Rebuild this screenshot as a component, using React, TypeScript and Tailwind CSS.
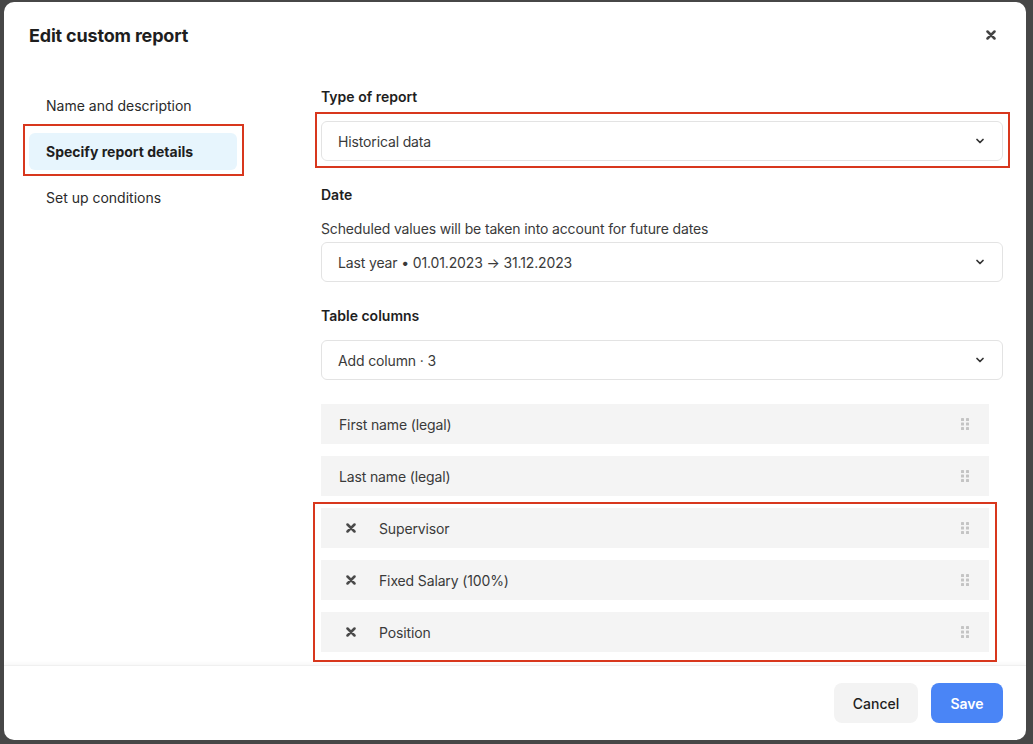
import { ChevronDown } from 'lucide-react';

const XMark = ({ className }: { className?: string }) => (
  <svg aria-hidden="true" className={className} viewBox="0 0 10 10" fill="none">
    <path d="M1.5 1.5l7 7M8.5 1.5l-7 7" stroke="currentColor" strokeWidth="2.5" strokeLinecap="round" />
  </svg>
);

const DragHandle = () => (
  <svg aria-hidden="true" className="h-[12px] w-[8px] text-[#c4c4c4]" viewBox="0 0 8 12" fill="currentColor">
    <rect x="0" y="0" width="3" height="3" rx="0.6" />
    <rect x="5" y="0" width="3" height="3" rx="0.6" />
    <rect x="0" y="4.5" width="3" height="3" rx="0.6" />
    <rect x="5" y="4.5" width="3" height="3" rx="0.6" />
    <rect x="0" y="9" width="3" height="3" rx="0.6" />
    <rect x="5" y="9" width="3" height="3" rx="0.6" />
  </svg>
);

const Select = ({ value }: { value: string }) => (
  <div className="flex h-[40px] items-center justify-between rounded-[6px] border border-[#e3e3e3] bg-white pl-[16px] pr-[16px] text-[14px] tracking-[-0.01em] text-[#3a3a3a]">
    <span>{value}</span>
    <ChevronDown aria-hidden="true" className="h-[12px] w-[12px] text-[#333]" strokeWidth={3.5} />
  </div>
);

const ColumnRow = ({ label, removable }: { label: string; removable?: boolean }) => (
  <div className="flex h-[40px] items-center justify-between bg-[#f4f4f4] pr-[20px] text-[14px] tracking-[-0.01em] text-[#3a3a3a]">
    <div className="flex items-center">
      {removable ? (
        <>
          <XMark className="ml-[25px] h-[10px] w-[10px] text-[#4a4a4a]" />
          <span className="ml-[23px]">{label}</span>
        </>
      ) : (
        <span className="ml-[18px]">{label}</span>
      )}
    </div>
    <DragHandle />
  </div>
);

const navItems = ['Name and description', 'Specify report details', 'Set up conditions'];

export default function App() {
  return (
    <div className="min-h-screen w-full bg-[#474747] pl-[4px] pt-[2px] font-['Inter','Liberation_Sans',sans-serif]">
      <div className="flex h-[738px] w-[1022px] flex-col overflow-hidden rounded-[10px] bg-white">
        <header className="flex h-[66px] shrink-0 items-center justify-between pl-[25px] pr-[30px]">
          <h1 className="text-[18px] font-bold tracking-[-0.01em] text-[#1e1e1e]">Edit custom report</h1>
          <XMark className="h-[10px] w-[10px] text-[#444]" />
        </header>

        <div className="grid h-[597px] shrink-0 grid-cols-[317px_minmax(0,1fr)] overflow-hidden">
          <nav className="flex flex-col gap-[9px] pl-[25px] pt-[19px]">
            {navItems.map((item, index) => (
              <div className="relative w-[208px]" key={item}>
                <div
                  className={`flex h-[37px] items-center rounded-[6px] pl-[17px] text-[14px] ${
                    index === 1 ? 'bg-[#e7f5fd] font-bold text-[#1e1e1e]' : 'text-[#2a2a2a]'
                  }`}
                >
                  {item}
                </div>
                {index === 1 && (
                  <span className="pointer-events-none absolute -bottom-[6px] -left-[6px] -right-[7px] -top-[9px] border-2 border-[#d8371d]" />
                )}
              </div>
            ))}
          </nav>

          <section className="flex flex-col pr-[23px] pt-[19px]">
            <h2 className="text-[14px] font-semibold leading-[20px] text-[#1e1e1e]">Type of report</h2>
            <div className="relative mt-[14px]">
              <Select value="Historical data" />
              <span className="pointer-events-none absolute -bottom-[7px] -left-[6px] -right-[7px] -top-[9px] border-2 border-[#d8371d]" />
            </div>

            <h2 className="mt-[24px] text-[14px] font-semibold leading-[20px] text-[#1e1e1e]">Date</h2>
            <p className="mt-[14px] text-[14px] leading-[20px] tracking-[-0.01em] text-[#3a3a3a]">
              Scheduled values will be taken into account for future dates
            </p>
            <div className="mt-[3px]">
              <Select value="Last year • 01.01.2023 → 31.12.2023" />
            </div>

            <h2 className="mt-[24px] text-[14px] font-semibold leading-[20px] text-[#1e1e1e]">Table columns</h2>
            <div className="mt-[14px]">
              <Select value="Add column · 3" />
            </div>

            <div className="mt-[24px] flex w-[668px] flex-col gap-[12px]">
              <ColumnRow label="First name (legal)" />
              <ColumnRow label="Last name (legal)" />
              <div className="relative flex flex-col gap-[12px]">
                <ColumnRow label="Supervisor" removable />
                <ColumnRow label="Fixed Salary (100%)" removable />
                <ColumnRow label="Position" removable />
                <span className="pointer-events-none absolute -bottom-[10px] -left-[8px] -right-[8px] -top-[6px] border-2 border-[#d8371d]" />
              </div>
            </div>
          </section>
        </div>

        <footer className="flex flex-1 items-center justify-end gap-[13px] border-t border-[#f0f0f0] pr-[23px] shadow-[0_-2px_4px_rgba(0,0,0,0.03)]">
          <button className="h-[40px] w-[84px] rounded-[8px] bg-[#f3f3f3] text-[14px] font-medium text-[#1e1e1e]" type="button">
            Cancel
          </button>
          <button className="h-[40px] w-[72px] rounded-[8px] bg-[#4a85f6] text-[14px] font-semibold text-white" type="button">
            Save
          </button>
        </footer>
      </div>
    </div>
  );
}
